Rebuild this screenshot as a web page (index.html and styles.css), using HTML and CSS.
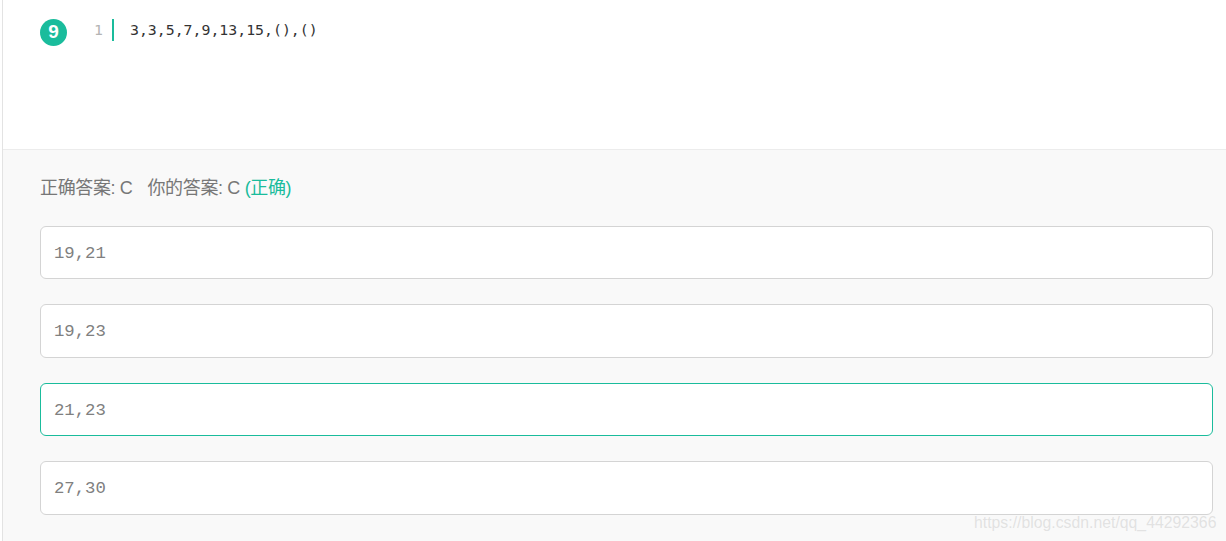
FILE: index.html
```html
<!DOCTYPE html>
<html lang="zh">
  <head>
    <meta charset="UTF-8" />
    <title>答案解析</title>
    <link rel="stylesheet" href="styles.css">
  </head>
  <body>
    <div class="question">
      <div class="question_head">
        <span class="num">9</span>
        <div class="code">
          <span class="line_no">1</span>
          <span class="code_text">3,3,5,7,9,13,15,(),()</span>
        </div>
      </div>
      <div class="answer">
        <p class="result">正确答案: C<span class="yours">你的答案: C</span> <span class="right">(正确)</span></p>
        <ul class="options">
          <li>19,21</li>
          <li>19,23</li>
          <li class="selected">21,23</li>
          <li>27,30</li>
        </ul>
      </div>
    </div>
    <div class="watermark">https://blog.csdn.net/qq_44292366</div>
  </body>
</html>
```

FILE: styles.css
```css
html, body {
  margin: 0;
  height: 541px;
  overflow: hidden;
}
body {
  font-family: "Liberation Sans", "Noto Sans CJK SC", sans-serif;
  background: #fff;
  position: relative;
}
.question {
  margin-left: 2px;
  border-left: 1px solid #e3e3e3;
  height: 541px;
}
.question_head {
  display: flex;
  height: 150px;
  box-sizing: border-box;
  padding: 19px 0 0 37px;
  border-bottom: 1px solid #ececec;
}
.num {
  width: 27px;
  height: 27px;
  border-radius: 50%;
  background: #1abc9c;
  color: #fff;
  font-size: 19px;
  font-weight: 700;
  line-height: 26px;
  text-align: center;
}
.code {
  display: flex;
  height: 22px;
  font-family: "DejaVu Sans Mono", monospace;
  font-size: 14.85px;
  line-height: 22px;
  margin-left: 27px;
}
.line_no {
  width: 9px;
  color: #b4b4b4;
}
.code_text {
  margin-left: 9px;
  padding-left: 16px;
  border-left: 2px solid #1abc9c;
  color: #333;
}
.answer {
  background: #f9f9f9;
  height: 391px;
  padding: 26px 13px 0 37px;
  box-sizing: border-box;
}
.result {
  margin: 0;
  font-size: 18px;
  line-height: 24px;
  color: #777;
  letter-spacing: -0.36px;
}
.yours {
  margin-left: 15px;
}
.right {
  color: #1abc9c;
}
.options {
  list-style: none;
  margin: 26px 0 0;
  padding: 0;
  display: flex;
  flex-direction: column;
  gap: 25px;
}
.options li {
  height: 53.4px;
  box-sizing: border-box;
  padding-left: 13px;
  border: 1px solid #d4d4d4;
  border-radius: 6px;
  background: #fff;
  color: #808080;
  font-family: "Liberation Mono", monospace;
  font-size: 17.3px;
  line-height: 53px;
}
.options li.selected {
  border-color: #1abc9c;
}
.watermark {
  position: absolute;
  left: 974px;
  top: 513px;
  font-size: 15.8px;
  line-height: 20px;
  color: rgba(190, 190, 190, 0.4);
}
```
